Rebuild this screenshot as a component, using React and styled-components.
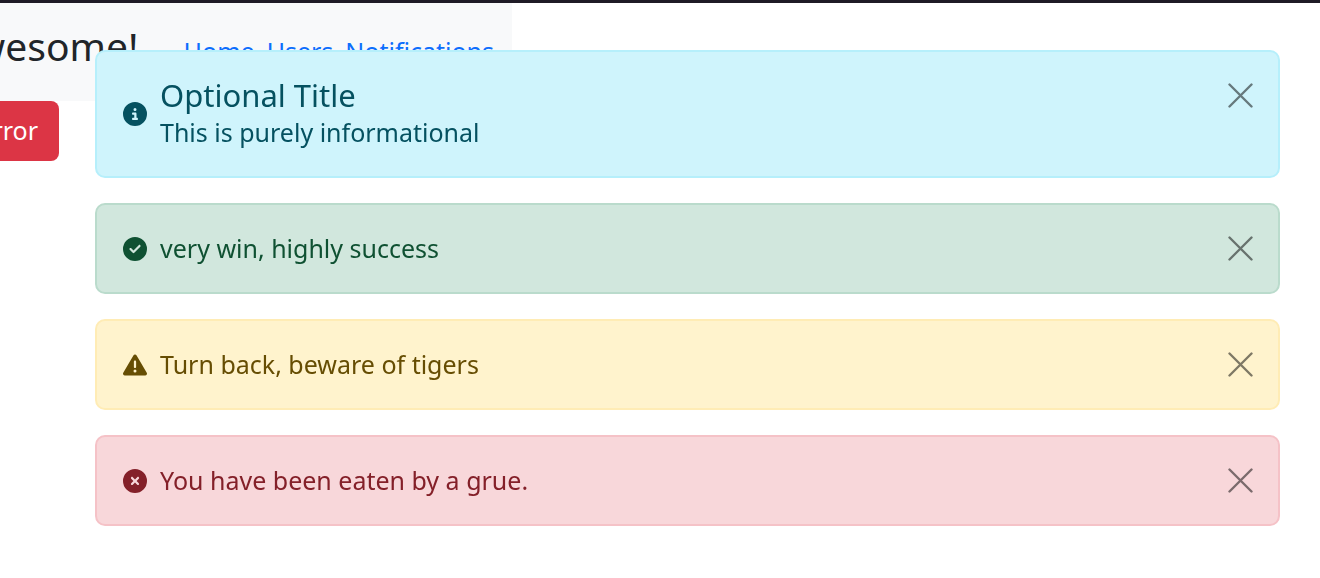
import React, { useState } from "react";
import styled, { createGlobalStyle } from "styled-components";
import {
  FaCircleInfo,
  FaCircleCheck,
  FaTriangleExclamation,
  FaCircleXmark,
} from "react-icons/fa6";

const GlobalStyle = createGlobalStyle`
  * { box-sizing: border-box; }
  body {
    margin: 0;
    background: #fff;
    color: #212529;
    font: 400 25px/37px "Noto Sans", sans-serif;
    overflow-x: hidden;
  }
`;

const Page = styled.div`
  border-top: 3px solid #1f1b26;
  overflow: hidden;
`;

const Header = styled.header`
  display: flex;
  align-items: baseline;
  justify-content: flex-end;
  width: 512px;
  max-width: 100%;
  padding: 14px 18px 26px;
  background: #f8f9fa;
`;

const Brand = styled.span`
  margin-right: 45px;
  font-size: 39px;
  line-height: 58px;
`;

const Nav = styled.nav`
  display: flex;
  gap: 12px;
`;

const NavLink = styled.a`
  color: #0d6efd;
  text-decoration: none;
`;

const Actions = styled.div`
  display: flex;
  justify-content: flex-end;
  width: 59px;
`;

const DangerButton = styled.button`
  flex: none;
  padding: 11px 21px 12px;
  border: 0;
  border-radius: 8px;
  background: #dc3545;
  color: #fff;
  font: inherit;
`;

const AlertStack = styled.section`
  position: fixed;
  top: 50px;
  left: 95px;
  right: 40px;
  display: flex;
  flex-direction: column;
  gap: 25px;
`;

const tones = {
  info: { text: "#055160", fill: "#cff4fc", line: "#b6effb" },
  success: { text: "#0f5132", fill: "#d1e7dd", line: "#badbcc" },
  warning: { text: "#664d03", fill: "#fff3cd", line: "#ffecb5" },
  danger: { text: "#842029", fill: "#f8d7da", line: "#f5c2c7" },
};

const AlertBox = styled.div`
  display: flex;
  align-items: flex-start;
  padding: 25px 25px 25px 26px;
  border: 2px solid ${(p) => tones[p.$tone].line};
  border-radius: 10px;
  background: ${(p) => tones[p.$tone].fill};
  color: ${(p) => tones[p.$tone].text};
`;

const AlertContent = styled.div`
  display: flex;
  flex: 1;
  align-items: center;
  gap: 13px;
`;

const AlertIcon = styled.span`
  display: flex;
  font-size: 24px;
`;

const AlertTitle = styled.h2`
  margin: 0 0 1px;
  font-size: 31px;
  font-weight: 400;
  line-height: 36px;
`;

const AlertText = styled.p`
  margin: 0;
`;

const CloseButton = styled.button`
  display: flex;
  margin: 6px 0;
  padding: 0;
  border: 0;
  background: none;
  color: #000;
  opacity: 0.5;
  cursor: pointer;
`;

const alerts = [
  { tone: "info", icon: FaCircleInfo, title: "Optional Title", text: "This is purely informational" },
  { tone: "success", icon: FaCircleCheck, text: "very win, highly success" },
  { tone: "warning", icon: FaTriangleExclamation, text: "Turn back, beware of tigers" },
  { tone: "danger", icon: FaCircleXmark, text: "You have been eaten by a grue." },
];

function Alert({ tone, icon: Icon, title, text, onClose }) {
  return (
    <AlertBox $tone={tone} role="alert">
      <AlertContent>
        <AlertIcon><Icon aria-hidden="true" /></AlertIcon>
        <div>
          {title && <AlertTitle>{title}</AlertTitle>}
          <AlertText>{text}</AlertText>
        </div>
      </AlertContent>
      <CloseButton type="button" aria-label="Close" onClick={onClose}>
        <svg width="25" height="25" viewBox="0 0 25 25" fill="none" stroke="currentColor" strokeWidth="2.4" strokeLinecap="round" aria-hidden="true">
          <path d="M1.5 1.5l22 22M23.5 1.5l-22 22" />
        </svg>
      </CloseButton>
    </AlertBox>
  );
}

export default function App() {
  const [open, setOpen] = useState(alerts);
  return (
    <Page>
      <GlobalStyle />
      <Header>
        <Brand>Awesome!</Brand>
        <Nav>
          <NavLink href="#home">Home</NavLink>
          <NavLink href="#users">Users</NavLink>
          <NavLink href="#notifications">Notifications</NavLink>
        </Nav>
      </Header>
      <Actions>
        <DangerButton type="button">Error</DangerButton>
      </Actions>
      <AlertStack aria-label="Notifications">
        {open.map((a) => (
          <Alert key={a.tone} {...a} onClose={() => setOpen(open.filter((o) => o !== a))} />
        ))}
      </AlertStack>
    </Page>
  );
}
